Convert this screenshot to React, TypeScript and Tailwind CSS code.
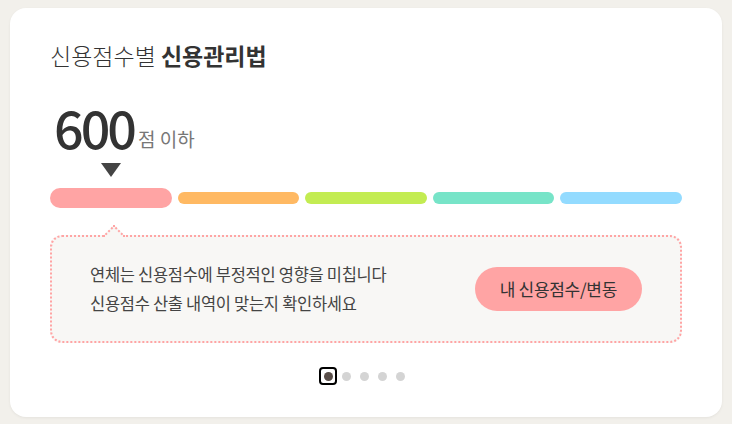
export default function App() {
  const bars = [
    { color: "bg-[#ffa4a4]", active: true },
    { color: "bg-[#ffb963]", active: false },
    { color: "bg-[#c3ec52]", active: false },
    { color: "bg-[#77e4c8]", active: false },
    { color: "bg-[#93dbff]", active: false },
  ];

  return (
    <div className="h-[424px] w-[732px] overflow-hidden bg-[#f2f0eb] pt-2 px-[10px] font-['Noto_Sans_CJK_KR','Noto_Sans',sans-serif]">
      <div className="h-[409px] rounded-2xl bg-white px-10 pt-[33px] shadow-[0_1px_3px_rgba(0,0,0,0.06)]">
        {/* Title */}
        <h2 className="text-[23px] leading-7 text-[#333]">
          <span className="font-light">신용점수별 </span>
          <span className="font-bold">신용관리법</span>
        </h2>

        {/* Score */}
        <div className="mt-[32px] flex items-end pl-1">
          <span className="text-[52px] leading-none font-medium text-[#333] tracking-[-3px]">600</span>
          <span className="ml-1 mb-[2px] text-[19px] leading-6 text-[#777]">점 이하</span>
        </div>

        {/* Scale */}
        <div className="mt-[10px] flex gap-[6px]">
          {bars.map((b, i) => (
            <div key={i} className="flex flex-1 flex-col items-center">
              <div
                className={`h-0 w-0 border-x-[10px] border-t-[14px] border-x-transparent ${
                  b.active ? "border-t-[#444]" : "border-t-transparent"
                }`}
              />
              <div className="mt-[11px] flex h-5 w-full items-center">
                <div className={`w-full rounded-full ${b.color} ${b.active ? "h-5 rounded-[10px]" : "h-3"}`} />
              </div>
            </div>
          ))}
        </div>

        {/* Bubble */}
        <div className="relative mt-[27px] flex h-[108px] items-center justify-between rounded-xl border-2 border-dotted border-[#ffa4a4] bg-[#f8f7f5] pl-[38px] pr-[38px]">
          <div className="absolute -top-[9px] left-[54px] h-4 w-4 rotate-45 border-l-2 border-t-2 border-dotted border-[#ffa4a4] bg-[#f8f7f5]" />
          <p className="text-[16.5px] leading-[29px] text-[#444] tracking-[-0.3px]">
            연체는 신용점수에 부정적인 영향을 미칩니다
            <br />
            신용점수 산출 내역이 맞는지 확인하세요
          </p>
          <button className="h-11 rounded-full bg-[#ffa4a4] px-[25px] text-[17px] text-[#333] tracking-[-0.3px]">
            내 신용점수/변동
          </button>
        </div>

        {/* Pager */}
        <div className="mt-6 flex justify-center pr-1">
          {[0, 1, 2, 3, 4].map((i) => (
            <div
              key={i}
              className={`flex h-[18px] w-[18px] items-center justify-center ${
                i === 0 ? "rounded-[4px] border-2 border-black" : ""
              }`}
            >
              <span className={`block h-[9px] w-[9px] rounded-full ${i === 0 ? "bg-[#5a4f4a]" : "bg-[#d4d4d4]"}`} />
            </div>
          ))}
        </div>
      </div>
    </div>
  );
}
